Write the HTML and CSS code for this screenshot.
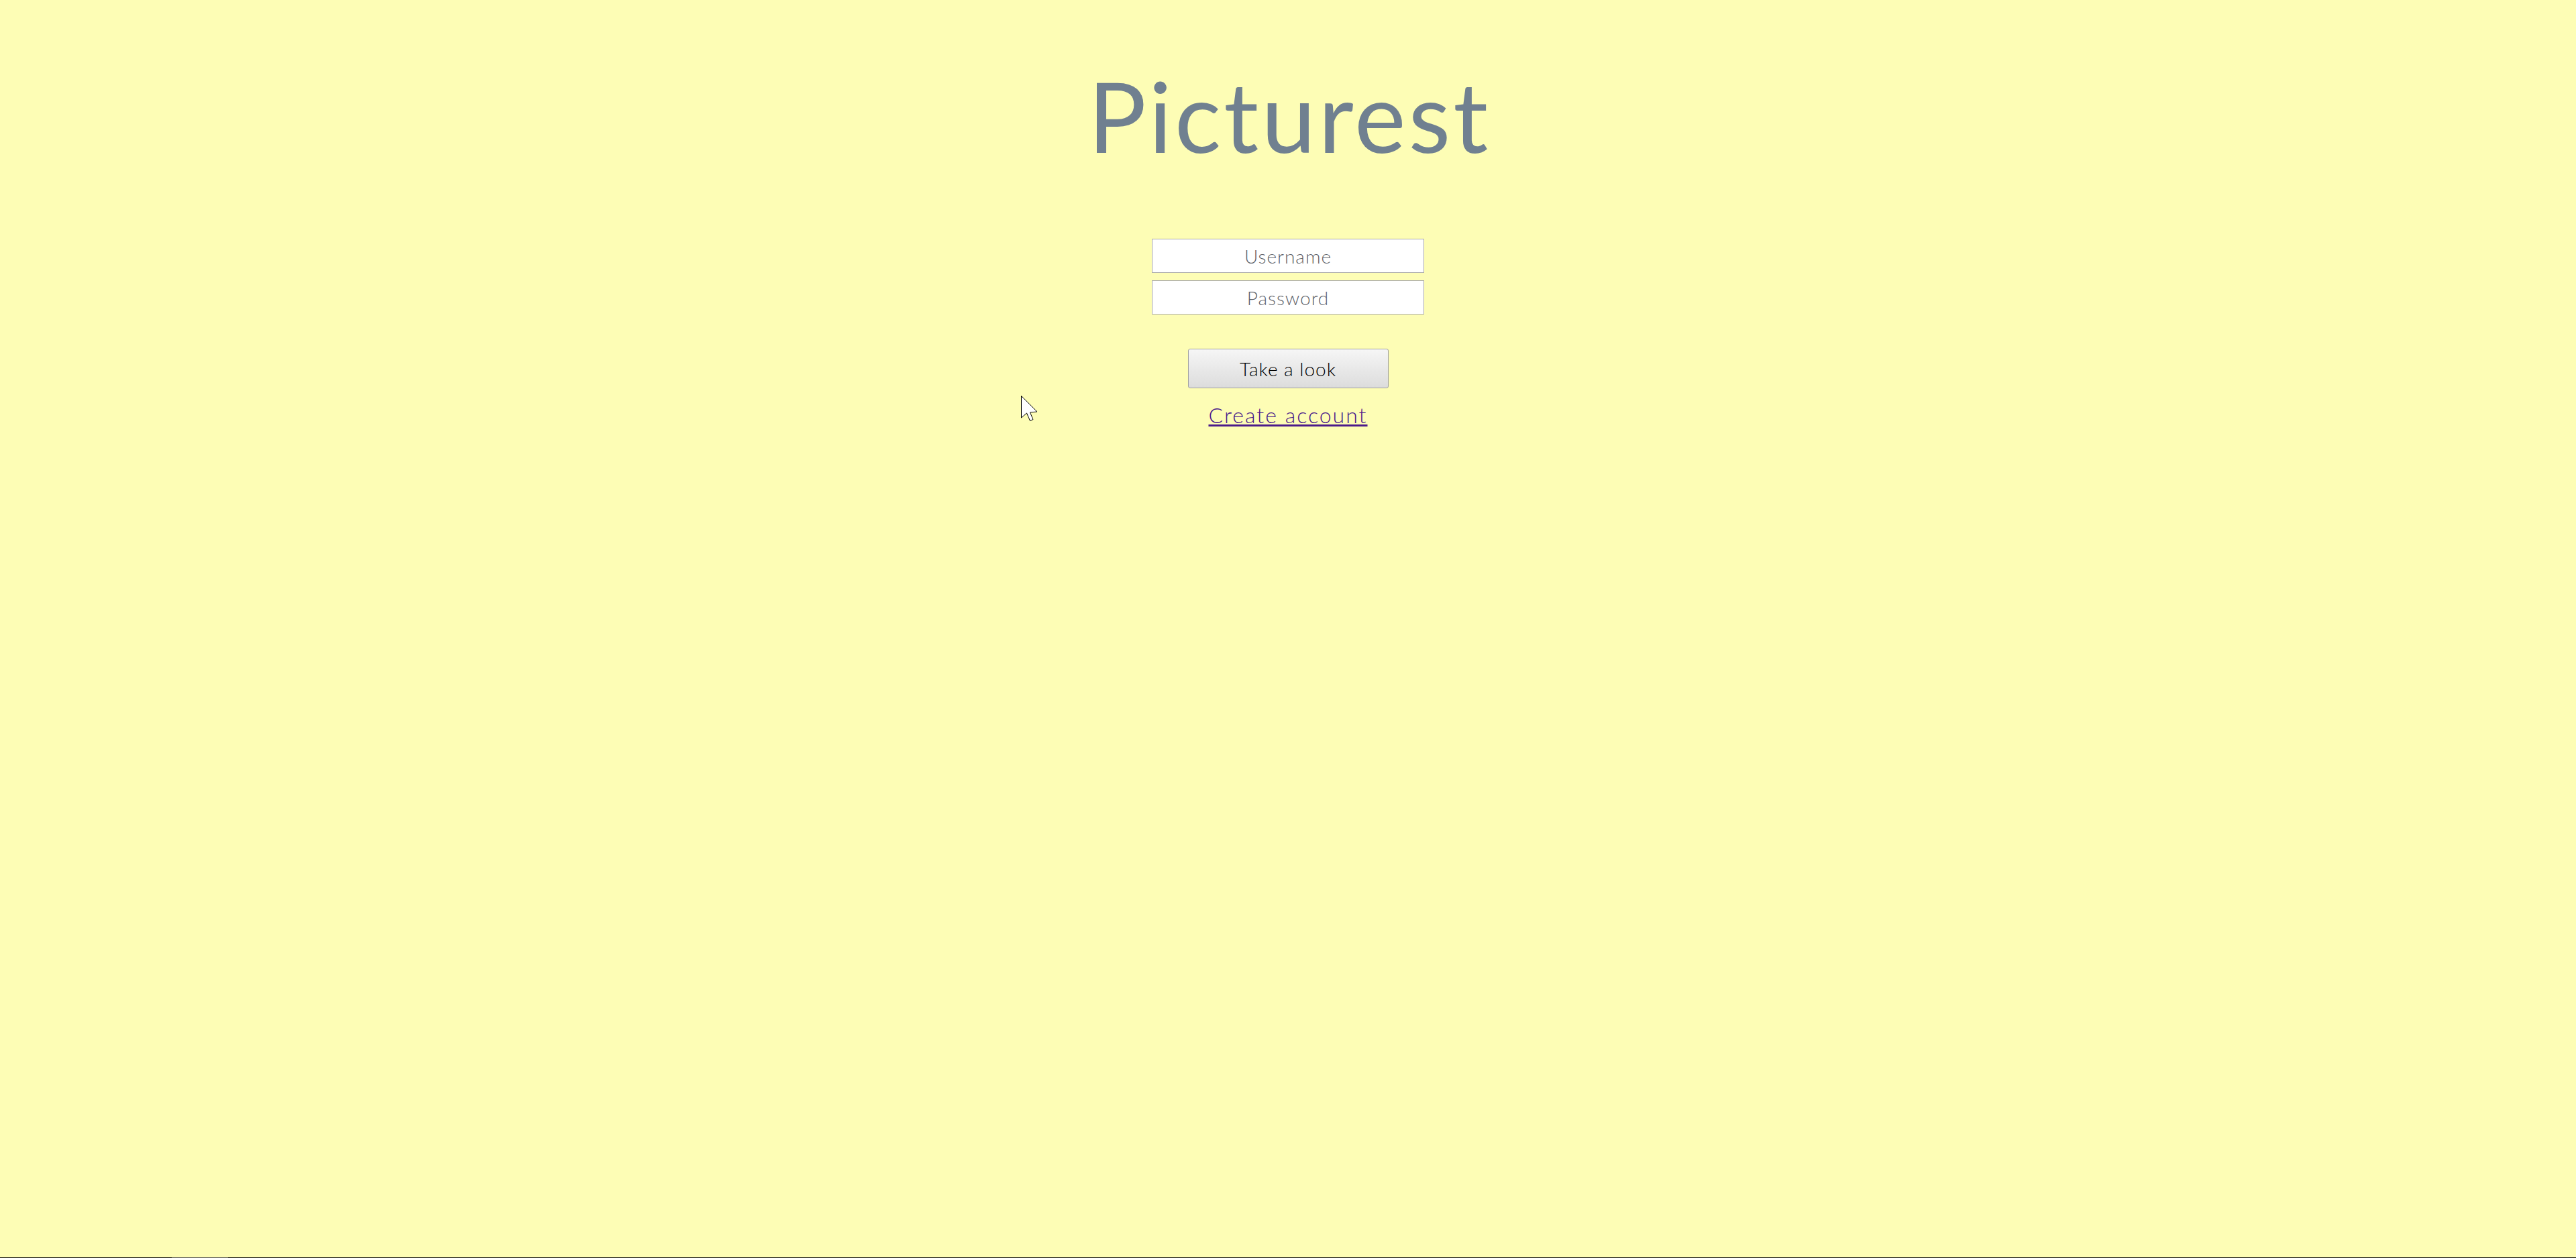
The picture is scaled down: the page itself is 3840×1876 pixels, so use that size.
FILE: index.html
```html
<!DOCTYPE html>
<html lang="en">
<head>
<meta charset="utf-8">
<title>Picturest</title>
<link rel="stylesheet" href="styles.css">
</head>
<body>
<main class="page">
  <h1 class="title">Picturest</h1>
  <form class="login">
    <input class="field" type="text" placeholder="Username">
    <input class="field" type="password" placeholder="Password">
    <button class="submit" type="button">Take a look</button>
    <a class="create" href="#">Create account</a>
  </form>
</main>
<div class="screen-edge"><span class="edge-seg"></span></div>
<svg class="cursor" width="26" height="40" viewBox="0 0 26 40" aria-hidden="true">
  <path d="M0.5 0.5 L0.5 33 L8.5 26 L13.5 37.5 L18 35.5 L13.5 25 L24 24 Z" fill="#fff" stroke="#000" stroke-width="1"/>
</svg>
</body>
</html>
```
FILE: styles.css
```css
html, body {
  margin: 0;
  padding: 0;
}
body {
  background: #fdfdb5;
  min-height: 1876px;
  display: flex;
  flex-direction: column;
  font-family: Lato, "Liberation Sans", sans-serif;
  position: relative;
}
.page {
  flex: 1;
  display: flex;
  flex-direction: column;
  align-items: center;
  padding-top: 100px;
}
.title {
  margin: 0;
  padding-left: 4px;
  font-family: Lato, "Liberation Sans", sans-serif;
  font-weight: 400;
  font-size: 145px;
  letter-spacing: 4px;
  line-height: 1;
  color: #708090;
}
.login {
  display: flex;
  flex-direction: column;
  align-items: center;
  margin-top: 111px;
}
.field {
  box-sizing: border-box;
  width: 406px;
  height: 51px;
  border: 1px solid #a9a9a9;
  background: #fff;
  font-family: Lato, "Liberation Sans", sans-serif;
  font-size: 28px;
  font-weight: 300;
  letter-spacing: 1px;
  text-align: center;
  color: #333;
  padding: 0;
  margin: 0;
}
.field + .field {
  margin-top: 11px;
}
.field::placeholder {
  color: #5f646b;
}
.submit {
  box-sizing: border-box;
  margin-top: 51px;
  width: 299px;
  height: 59px;
  border: 1px solid #a0a0a0;
  border-radius: 3px;
  background: linear-gradient(#f6f6f6, #dcdcdc);
  font-family: Lato, "Liberation Sans", sans-serif;
  font-size: 28px;
  font-weight: 300;
  letter-spacing: 1px;
  color: #000;
  padding: 0;
}
.create {
  margin-top: 20px;
  font-family: Lato, "Liberation Sans", sans-serif;
  font-size: 32px;
  font-weight: 300;
  letter-spacing: 2px;
  line-height: 40px;
  color: #4b1a8b;
  text-decoration: underline;
  text-decoration-thickness: 3px;
}
.screen-edge {
  height: 1px;
  background: #111;
  display: flex;
}
.edge-seg {
  margin-left: 256px;
  width: 84px;
  background: #555;
}
.cursor {
  position: absolute;
  left: 1522px;
  top: 590px;
}
```
